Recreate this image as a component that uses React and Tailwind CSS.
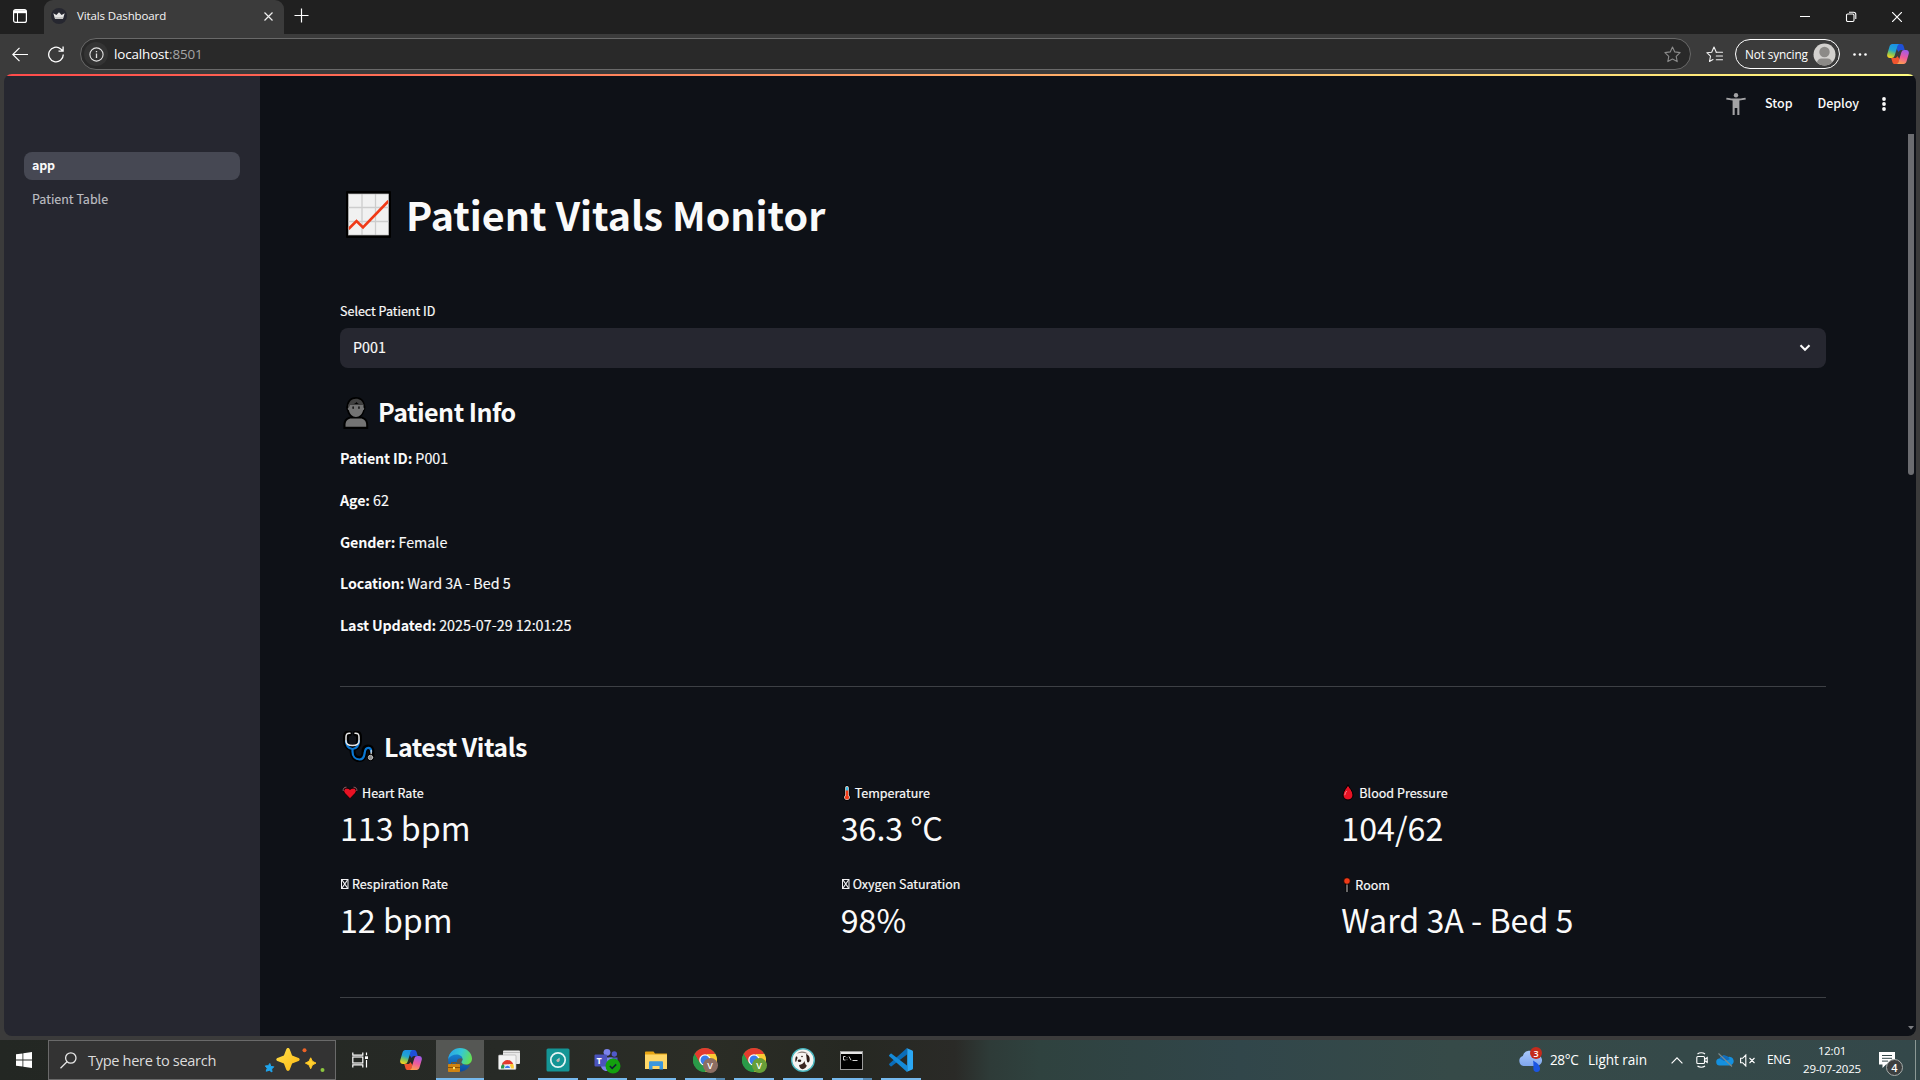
const SANS = "font-['Noto_Sans_CJK_SC',sans-serif]";
const UI = "font-['Open_Sans',sans-serif]";

/* ---------- Browser icons ---------- */

function CopilotIcon({ id }) {
  return (
    <svg width="22" height="20" viewBox="0 0 22 20" className="block shrink-0">
      <defs>
        <linearGradient id={`${id}a`} x1="0.6" y1="0" x2="0.3" y2="1">
          <stop offset="0" stopColor="#1a8fe8" />
          <stop offset="0.45" stopColor="#22a5d0" />
          <stop offset="0.7" stopColor="#7fc45a" />
          <stop offset="1" stopColor="#ffd21c" />
        </linearGradient>
        <linearGradient id={`${id}b`} x1="0.6" y1="0" x2="0.3" y2="1">
          <stop offset="0" stopColor="#a05be8" />
          <stop offset="0.5" stopColor="#ee5a9c" />
          <stop offset="1" stopColor="#ffa04c" />
        </linearGradient>
      </defs>
      <path d="M11 0h3.2c1.3 0 2 .8 2.400 2.100L17.800 6h-3.500c-1.400 0-2.200.8-2.600 2.100L9.500 5z" fill="#1f50d8" />
      <path d="M11 20H7.800c-1.300 0-2-.8-2.400-2.100L4.200 14h3.500c1.400 0 2.200-.8 2.600-2.100l2.200 3.100z" fill="#f0542e" />
      <path d="M5.300 0h7.200c-1.200.3-1.700 1.300-2.100 2.600L7.700 11.500C7.200 13.200 6.200 14 4.600 14H3C.6 14-.3 12.200.3 10L2.500 2.500C3 .9 3.900 0 5.300 0z" fill={`url(#${id}a)`} />
      <path d="M16.700 20H9.500c1.200-.3 1.700-1.300 2.100-2.600l2.700-8.900C14.800 6.800 15.800 6 17.400 6H19c2.400 0 3.300 1.800 2.700 4l-2.200 7.500c-.5 1.600-1.400 2.500-2.800 2.500z" fill={`url(#${id}b)`} />
    </svg>
  );
}

function TabActionsIcon() {
  return (
    <svg width="14" height="14" viewBox="0 0 14 14" className="block">
      <rect x="0.6" y="0.6" width="12.800" height="12.800" rx="2" fill="none" stroke="#fff" strokeWidth="1.200" />
      <path d="M1 1.200h12v3H1z" fill="#fff" />
      <path d="M4.500 4v9" stroke="#fff" />
    </svg>
  );
}

function CrownFavicon() {
  return (
    <svg width="16" height="16" viewBox="0 0 16 16" className="block">
      <circle cx="8" cy="8" r="8" fill="#262730" />
      <path d="M2.300 5.200 5.400 7 8 4.200 10.600 7l3.100-1.800-1.600 5.300c-.1.400-.4.500-.8.500H4.700c-.4 0-.7-.1-.8-.5z" fill="#e4e4e4" />
      <path d="M3.600 9.200h8.800l-.5 1.500H4.100z" fill="#b9b9b9" />
    </svg>
  );
}

function StarIcon({ color, list }) {
  return (
    <svg width="17" height="17" viewBox="0 0 17 17" className="block" fill="none" stroke={color} strokeWidth="1.100" strokeLinejoin="round" strokeLinecap="round">
      {list ? (
        <>
          <path d="M10.300 6.200 8 1 5.700 6.200.8 6.700l3.700 3.500-1 5.300L7 13.600" />
          <path d="M10.300 6.300h6.200M10.300 10h6.200M10.300 13.700h6.200" />
        </>
      ) : (
        <path d="m8.500 1 2.300 4.900 5.300.7-3.900 3.700 1 5.300-4.700-2.600-4.700 2.600 1-5.300L.9 6.600l5.300-.7z" />
      )}
    </svg>
  );
}

/* ---------- Emoji style icons ---------- */

function ChartEmoji() {
  return (
    <svg width="46" height="48" viewBox="0 0 46 48" className="block">
      <rect x="0" y="0" width="45" height="47" rx="1" fill="#000" />
      <rect x="2.500" y="3" width="40" height="41" fill="#f1f1f1" />
      <path d="M16 3v41M29.500 3v41M2.500 16.500h40M2.500 30.500h40" stroke="#cdcdcd" strokeWidth="1.300" />
      <path d="M2.500 38 10.500 30l6.500 6.500L42.500 10" fill="none" stroke="#f03a17" strokeWidth="2.600" />
      <rect x="2.500" y="3" width="40" height="41" fill="none" stroke="#bdbdbd" strokeWidth="0.700" />
    </svg>
  );
}

function PersonEmoji() {
  return (
    <svg width="26" height="32" viewBox="0 0 26 32" className="block">
      <path d="M13 0c5 0 8.500 3.400 9 8.500.7.600.7 3.800-.4 4.800-.7 3-1.800 5-3.800 6.300 4.700.5 7.400 4 7.400 8.400v4H.4v-4c0-4.400 2.700-7.900 7.400-8.400-2-1.300-3.100-3.300-3.800-6.300-1-1-1-4.200-.3-4.800C4.200 3.400 8 0 13 0z" fill="#000" />
      <path d="M5.500 7.500h15v3c1 0 1 2.600-.4 2.800C19.500 17 16.600 20 13 20s-6.500-3-7.100-6.700c-1.400-.2-1.400-2.800-.4-2.800z" fill="#737373" />
      <path d="M5.300 10.500C5.300 5 8.500 1.800 13 1.800c3.800 0 6.700 2.200 7.500 6C17 8 14.800 6.800 13.600 5 12.300 7 9 7.800 7 7.800c0 1.200-.5 2.200-1.700 2.700z" fill="#404040" />
      <rect x="9.300" y="9.200" width="1.700" height="2.800" rx="0.800" fill="#1b1b1b" />
      <rect x="15.100" y="9.200" width="1.700" height="2.800" rx="0.800" fill="#1b1b1b" />
      <path d="M2.500 29.800v-2c0-3.800 2.400-6.200 6-6.200h8.700c3.600 0 6 2.400 6 6.200v2z" fill="#737373" />
    </svg>
  );
}

function StethoscopeEmoji() {
  return (
    <svg width="32" height="32" viewBox="0 0 32 32" className="block" fill="none" strokeLinecap="round">
      <path d="M6 2.500C3.500 2.500 3 3.500 3 6v4c0 4 2.500 7 6.500 7S16 14 16 10V6c0-2.500-.5-3.500-3-3.500M9.500 17v3c0 5 3 8 7 8s5-4 5-7 1-4.500 3.500-4.500S28.500 18 28.500 21v4" stroke="#000" strokeWidth="6" />
      <path d="M3 10c0 4 2.500 8 6.500 8S16 14 16 10M9.500 18.500v2c0 5 3 8 7 8s4.800-3.500 5.200-6.500c.3-3 .8-5.200 3.500-5.200 2.500 0 3 2 3 4" stroke="#0a78d4" strokeWidth="2.200" />
      <path d="M7 2.200C4 2 3 3.200 3 6v4c0 3 3 4.500 6.500 4.500S16 13 16 10V6c0-2.800-1-4-4-3.800" stroke="#e6e6e6" strokeWidth="1.500" />
      <path d="M28.200 19.500v4" stroke="#d0d0d0" strokeWidth="1.300" />
      <circle cx="27.500" cy="26.500" r="3.400" fill="#000" />
      <circle cx="27.500" cy="26.500" r="2.200" fill="#8e8e8e" stroke="#bdbdbd" strokeWidth="1" />
    </svg>
  );
}

function HeartEmoji() {
  return (
    <svg width="16" height="14" viewBox="0 0 16 14" className="block">
      <path d="M8 12.700 2.500 7C1.200 5.200 1.800 2.900 3.700 2.300 5.300 1.900 6.900 2.400 8 3.600c1.100-1.200 2.700-1.700 4.300-1.300 1.900.6 2.500 2.900 1.200 4.700z" fill="#e81224" stroke="#000" strokeWidth="0.800" />
      <path d="M1.200 5C.9 2.500 2.200 1.100 4.500 1.200M14.800 5c.3-2.500-1-3.900-3.300-3.800" fill="none" stroke="#9a5f64" strokeWidth="0.900" />
    </svg>
  );
}

function ThermometerEmoji() {
  return (
    <svg width="8" height="16" viewBox="0 0 8 16" className="block">
      <path d="M4 .2c1.700 0 2.500 1 2.500 2.500v7c.8.7 1.200 1.500 1.200 2.500 0 2-1.600 3.500-3.700 3.500S.3 14.200.3 12.200c0-1 .4-1.800 1.200-2.500v-7C1.500 1.200 2.300.2 4 .2z" fill="#000" />
      <path d="M4 1c1.200 0 1.800.8 1.800 2v7.200c.7.500 1.100 1.200 1.100 2 0 1.500-1.300 2.700-2.900 2.700s-2.900-1.200-2.900-2.700c0-.8.400-1.500 1.100-2V3C2.200 1.800 2.800 1 4 1z" fill="#e8dcd8" />
      <path d="M3 3c0-.7.400-1.100 1-1.100s1 .4 1 1.100v3H3z" fill="#35c1f1" />
      <path d="M2.800 5.500h2.400v5.200c.6.300 1 .9 1 1.500a2.200 2.200 0 0 1-4.400 0c0-.6.400-1.200 1-1.500z" fill="#f03a17" />
    </svg>
  );
}

function DropEmoji() {
  return (
    <svg width="12" height="17" viewBox="0 0 12 17" className="block">
      <path d="M6 .8C7.200 4 11 6.800 11 11a5 5 0 0 1-10 0C1 6.800 4.800 4 6 .8z" fill="#e81224" stroke="#000" strokeWidth="1" />
      <path d="M2.800 10.800C3 9.300 3.600 8.300 4.500 7.300" fill="none" stroke="#f4838c" strokeWidth="1" strokeLinecap="round" />
    </svg>
  );
}

function PinEmoji() {
  return (
    <svg width="8" height="16" viewBox="0 0 8 16" className="block">
      <path d="M4 6v9" stroke="#000" strokeWidth="3" />
      <path d="M4 6v9" stroke="#8a8a8a" strokeWidth="1.500" />
      <circle cx="4" cy="4" r="3.300" fill="#f03a17" stroke="#000" strokeWidth="0.700" />
    </svg>
  );
}

function MissingGlyph() {
  return (
    <svg width="8" height="10" viewBox="0 0 8 10" className="block">
      <rect x="0.500" y="0.500" width="6.500" height="9" fill="none" stroke="#f0f0f2" strokeWidth="1" />
      <path d="m1 1 5.500 8M6.500 1 1 9" stroke="#f0f0f2" strokeWidth="1.200" />
    </svg>
  );
}

function PersonArmsIcon() {
  return (
    <svg width="20" height="23" viewBox="0 0 20 23" className="block" fill="#a3a3a5">
      <circle cx="10" cy="2.300" r="2.200" />
      <path d="M.5 4.700C3.500 5.200 7 5.600 10 5.600s6.500-.4 9.500-.9l.3 1.900c-2 .4-4.300.8-6.400 1V22h-2.100v-7H8.700v7H6.600V7.600c-2.100-.2-4.400-.6-6.400-1z" />
    </svg>
  );
}

/* ---------- Taskbar icons ---------- */

function SparklesArt() {
  return (
    <svg width="62" height="30" viewBox="0 0 62 30" className="block">
      <defs>
        <linearGradient id="sparkle" x1="0" y1="0" x2="1" y2="1">
          <stop offset="0" stopColor="#ffe04a" />
          <stop offset="1" stopColor="#fdb813" />
        </linearGradient>
      </defs>
      <path d="M24 3c1 0 1.500.6 1.900 1.700l2.200 5.800 5.800 2.200c2.400.8 2.400 2.800 0 3.600l-5.800 2.200-2.200 5.800c-.8 2.300-3 2.300-3.800 0l-2.200-5.800-5.800-2.200c-2.400-.8-2.400-2.800 0-3.600l5.800-2.200 2.200-5.800C22.500 3.600 23 3 24 3z" fill="url(#sparkle)" />
      <path d="m46.700 12.800 1.700 3.500 3.600 1.800-3.600 1.800-1.700 3.800-1.700-3.800-3.600-1.800 3.600-1.800z" fill="#ffd02e" stroke="#ffc423" strokeLinejoin="round" />
      <path d="m5.800 18.500 1 3 3 .3-2.200 2.200.4 3-2.600-1.700-3.200.9 1-3-1.900-2.300 3-.2z" fill="#1fa5ee" stroke="#1fa5ee" strokeLinejoin="round" />
      <circle cx="40.500" cy="5.300" r="2" fill="#ee6326" />
      <circle cx="58.500" cy="25" r="2" fill="#8cc63f" />
    </svg>
  );
}

function TaskViewIcon() {
  return (
    <svg width="17" height="16" viewBox="0 0 17 16" className="block" fill="none" stroke="#fff" strokeWidth="1.200">
      <path d="M.8.500v2.600h10V.500M.8 15.500v-2.600h10v2.600" />
      <rect x="0.800" y="5" width="10" height="6" />
      <path d="M14.500.500v2.800M14.500 8v7.500" />
      <path d="M13 4.300h3V7h-3z" fill="#fff" stroke="none" />
    </svg>
  );
}

function EdgeIcon() {
  return (
    <svg width="24" height="24" viewBox="0 0 24 24" className="block">
      <defs>
        <linearGradient id="edgeTop" x1="0" y1="0.300" x2="1" y2="0.600">
          <stop offset="0" stopColor="#2aa4e8" />
          <stop offset="0.500" stopColor="#35c8d4" />
          <stop offset="1" stopColor="#66e04e" />
        </linearGradient>
        <linearGradient id="edgeBase" x1="0" y1="0" x2="0" y2="1">
          <stop offset="0" stopColor="#1b8fdc" />
          <stop offset="1" stopColor="#0d4ba0" />
        </linearGradient>
      </defs>
      <path d="M.2 11C1 4.500 6 1 12 1c4 6 2 11 3 14 1 2.500 5 3 7 2-2 4-5.500 6.500-10 6.500C5 23.500-.5 18 .2 11z" fill="url(#edgeBase)" />
      <path d="M.2 11C1 4.500 6 0 12 0c6.800 0 12 5 12 10.500 0 4-3 6-6 6-3.200 0-4.700-1.200-4.700-2.200 0-.8 1.200-1.300 1.200-3.300C14.500 8 11.500 6.500 8.500 6.500 5 6.500 2 8 .2 11z" fill="url(#edgeTop)" />
      <path d="M9 12.500c1-2.500 4.500-3 5.500-1.500 0 2-1.200 2.500-1.200 3.300 0 .8.700 1.500 1.700 1.800l-1 1.500H8.500z" fill="#555754" />
      <rect x="0" y="16" width="12" height="8" rx="0.800" fill="#d08412" />
      <path d="M0 19.500h12" stroke="#8f5200" />
      <path d="M3.500 16v-1.200h5V16" fill="none" stroke="#8f5200" />
      <rect x="5" y="19" width="2" height="2.200" fill="#ffdf61" />
    </svg>
  );
}

function ChromeDisc() {
  return (
    <svg width={24} height={24} viewBox="0 0 24 24">
      <circle cx="12" cy="12" r="12" fill="#2a9a48" />
      <path d="M12 12 1.600 6A12 12 0 0 1 22.400 6z" fill="#e33b2e" />
      <path d="M12 6h10.400A12 12 0 0 1 12 24l5.200-9z" fill="#fcc934" />
      <path d="m1.600 6 5.200 9L12 12l2-6H12z" fill="#e33b2e" />
      <path d="M1.600 6 6.800 15 12 18l5.200-3L12 24A12 12 0 0 1 1.600 6z" fill="#2a9a48" />
      <circle cx="12" cy="12" r="5.800" fill="#fff" />
      <circle cx="12" cy="12" r="4.500" fill="#3a7cec" />
    </svg>
  );
}

function ChromeIcon({ badge }) {
  return (
    <div className="relative h-6 w-6">
      <svg width="24" height="24" className="block">
        <ChromeDisc />
      </svg>
      <span className={`${UI} ${badge} absolute top-[10px] left-[10px] flex h-[15px] w-[15px] items-center justify-center rounded-full text-[9px] leading-none font-semibold text-white`}>V</span>
    </div>
  );
}

function ChromeWindowsIcon() {
  return (
    <svg width="22" height="20" viewBox="0 0 22 20" className="block">
      <rect x="5" y="0.500" width="17" height="13.500" rx="1" fill="#e9e9e9" />
      <path d="M5 2.500h17" stroke="#bcbcbc" />
      <rect x="0.500" y="5" width="17.500" height="14.500" rx="1" fill="#f4f4f4" stroke="#a9a9a9" strokeWidth="0.600" />
      <path d="M3 18.500a6.500 6.500 0 0 1 2-5.200l3 5.200z" fill="#2a9a48" />
      <path d="M3.800 14.500C5 11.500 7 10 9.500 10s4.700 1.500 5.700 4z" fill="#e33b2e" />
      <path d="M15.200 14c.6 1.300.8 3 .6 4.500H11l1.500-4.500z" fill="#fcc934" />
      <path d="M6.300 18.500a3.200 3.200 0 0 1 6.400 0z" fill="#3a7cec" stroke="#fff" strokeWidth="0.800" />
    </svg>
  );
}

function ClockAppIcon() {
  return (
    <svg width="24" height="24" viewBox="0 0 24 24" className="block">
      <rect x="0.500" y="0.500" width="23" height="23" rx="1.500" fill="#149595" />
      <circle cx="12" cy="12" r="7.200" fill="none" stroke="#e6f5f5" strokeWidth="1.700" />
      <path d="m10.500 12.500 3-3v3z" fill="#d8e4e4" />
      <circle cx="12" cy="12.500" r="1.500" fill="#c9b1ae" />
    </svg>
  );
}

function TeamsIcon() {
  return (
    <div className="relative h-6 w-[26px]">
      <svg width="26" height="24" viewBox="0 0 26 24" className="block">
        <circle cx="20.300" cy="6" r="2.700" fill="#5059c9" />
        <circle cx="13" cy="4.300" r="3.400" fill="#7b83eb" />
        <path d="M15 9.500h8.500V16c0 3-2 5-4.500 5z" fill="#5059c9" />
        <path d="M7 9.500h11.500V17a6 6 0 0 1-6 6c-3.300 0-5.500-2.500-5.500-6z" fill="#7b83eb" />
        <rect x="0.500" y="6.500" width="12.500" height="12" rx="1" fill="#4b53bc" />
      </svg>
      <span className={`${UI} absolute top-[7px] left-[3px] text-[9px] leading-[11px] font-bold text-white`}>T</span>
      <svg width="16" height="16" viewBox="0 0 16 16" className="absolute top-[10px] left-[11px]">
        <circle cx="8" cy="8" r="7.500" fill="#13a10e" />
        <path d="m4.800 8 2.400 2.400 4-4" fill="none" stroke="#123" strokeWidth="1.500" />
      </svg>
    </div>
  );
}

function FolderIcon() {
  return (
    <svg width="22" height="19" viewBox="0 0 22 19" className="block">
      <path d="M0 1.500C0 .7.500.500 1 .500h7.500l1.500 2h12V17H0z" fill="#e8a512" />
      <path d="M0 3.500h22V18H0z" fill="#ffd767" />
      <path d="M4 18.500V11.500c0-.8.400-1.200 1.200-1.200h11.600c.8 0 1.200.4 1.200 1.200v7h-3.500V15h-7v3.500z" fill="#3a96dd" />
    </svg>
  );
}

function DogIcon() {
  return (
    <svg width="24" height="24" viewBox="0 0 24 24" className="block">
      <circle cx="12" cy="12" r="11.300" fill="#f6f4f2" stroke="#49b6bf" strokeWidth="1.400" />
      <path d="M6 5.500c4-3 9-2.200 11 .5l-2.500-.8C12 4.300 9 4.500 6 5.500z" fill="#8b7d78" />
      <path d="M15 6c2.500.5 4 3 3.700 6-.2 2-1.500 3-2.500 2-.7-2-.5-5-1.200-8z" fill="#2c1a16" />
      <path d="M5 8.500c1-.3 1.500.3 1.500 1.500L5 14c-1 0-1-3.500 0-5.500z" fill="#2c1a16" />
      <ellipse cx="8.500" cy="12.800" rx="1.800" ry="1.200" fill="#2c1a16" />
      <circle cx="11" cy="8.500" r="0.800" fill="#2c1a16" />
      <path d="M13.500 13c-.8 2.500-2.800 3.500-5.500 4 .5 2.500 1.500 3.800 3.500 4.300 2-.3 4-2 4.300-3.800-1.500-1-1.800-2.500-2.300-4.500z" fill="#3a2621" />
    </svg>
  );
}

function TerminalIcon() {
  return (
    <svg width="23" height="19" viewBox="0 0 23 19" className="block">
      <rect x="0.500" y="0.500" width="22" height="18" fill="#000" stroke="#9b9b9b" />
      <rect x="1" y="1" width="21" height="2" fill="#e6e6e6" />
      <path d="M3.500 5.500v3.500M3.500 5.500h2M3.500 9h2M7 6.500v.6M7 8.500v.6M9 5.500l2 3.700M12.500 9.500h5" stroke="#d6d6d6" fill="none" />
    </svg>
  );
}

function VsCodeIcon() {
  return (
    <svg width="24" height="24" viewBox="0 0 24 24" className="block">
      <path d="M18 0v6.600L2.600 18.200c-.4.300-.7.300-1 0L.300 17c-.4-.4-.4-.9 0-1.300z" fill="#0a6cb8" />
      <path d="M18 24v-6.600L2.600 5.800c-.4-.3-.7-.3-1 0L.300 7c-.4.400-.4.900 0 1.300z" fill="#148ad8" />
      <path d="m17.500 0 5.800 2.600c.5.200.7.600.7 1.100v16.600c0 .5-.2.900-.7 1.100L17.500 24c.5-.3.700-.7.700-1.300V1.300c0-.6-.2-1-.7-1.300z" fill="#2ba7f4" />
    </svg>
  );
}

function WeatherIcon() {
  return (
    <div className="relative h-6 w-6">
      <svg width="24" height="24" viewBox="0 0 24 24" className="block">
        <defs>
          <linearGradient id="cloud" x1="0" y1="0" x2="0" y2="1">
            <stop offset="0" stopColor="#a9c8fa" />
            <stop offset="1" stopColor="#7fa6ee" />
          </linearGradient>
        </defs>
        <path d="M5.500 18A5.200 5.200 0 0 1 4.800 8 6.800 6.800 0 0 1 17.500 6.500 5.500 5.500 0 0 1 19 18z" fill="url(#cloud)" />
        <path d="M15 12.500c3 1.500 7 4.500 7 8a3.300 3.300 0 0 1-6.600.3c-.2-2.500.4-5-.4-8.300z" fill="#1b55e2" />
      </svg>
      <span className={`${UI} absolute top-[-1px] left-3 flex h-3 w-3 items-center justify-center rounded-full bg-[#c42b1c] text-[9px] leading-none font-semibold text-white`}>3</span>
    </div>
  );
}

/* ---------- Layout pieces ---------- */

function TitleBar() {
  return (
    <div className="flex h-[34px] bg-[#202020]">
      <div className="flex w-11 items-center pb-[2px] pl-[13px]">
        <TabActionsIcon />
      </div>
      <div className="flex h-[34px] w-60 items-center rounded-t-[9px] bg-[#3b3b3b] pb-[2px] pl-[7px]">
        <CrownFavicon />
        <span className={`${UI} ml-[10px] w-[187px] text-[11.5px] leading-4 tracking-[-0.12px] text-[#f5f5f5]`}>Vitals Dashboard</span>
        <svg width="9" height="9" viewBox="0 0 9 9" className="mt-px block">
          <path d="m.5.500 8 8M8.500.500l-8 8" stroke="#eee" strokeWidth="1.200" />
        </svg>
      </div>
      <div className="flex items-center pb-[3px] pl-[10px]">
        <svg width="15" height="15" viewBox="0 0 15 15" className="block">
          <path d="M7.500.500v14M.500 7.500h14" stroke="#fff" strokeWidth="1.200" />
        </svg>
      </div>
      <div className="ml-auto flex items-center gap-9 pr-[18px]">
        <svg width="10" height="10" viewBox="0 0 10 10" className="block">
          <path d="M0 4.500h10" stroke="#fff" />
        </svg>
        <svg width="10" height="10" viewBox="0 0 10 10" className="block overflow-visible" fill="none" stroke="#fff" strokeWidth="1.100">
          <rect x="0.500" y="2" width="7.500" height="7.500" rx="1.200" />
          <path d="M3 .2h4.500c1.400 0 2.300.9 2.300 2.300v4.500" />
        </svg>
        <svg width="10" height="10" viewBox="0 0 10 10" className="block">
          <path d="m0 0 10 10M10 0 0 10" stroke="#fff" strokeWidth="1.200" />
        </svg>
      </div>
    </div>
  );
}

function Toolbar() {
  return (
    <div className="flex h-10 items-center bg-[#3b3b3b] pl-3">
      <svg width="16" height="15" viewBox="0 0 16 15" className="block" fill="none" stroke="#fff" strokeWidth="1.200">
        <path d="M16 7.500H1M7.500.800.800 7.500l6.700 6.700" />
      </svg>
      <svg width="17" height="17" viewBox="0 0 17 17" className="ml-5 block" fill="none" stroke="#fff" strokeWidth="1.300">
        <path d="M15.300 8.500a7.300 7.300 0 1 1-2.600-5.600l2.300 2M15.100.500v4.600H10.500" />
      </svg>
      <div className="ml-[15px] flex h-8 w-[1611px] items-center rounded-full border border-[#696969] bg-[#292929] pr-[9px] pl-[3px]">
        <div className="flex h-6 w-6 items-center justify-center rounded-full bg-[#343434]">
          <svg width="15" height="15" viewBox="0 0 15 15" className="block">
            <circle cx="7.500" cy="7.500" r="6.600" fill="none" stroke="#e2e2e2" strokeWidth="1.100" />
            <path d="M7.500 6.500V11M7.500 4v1.300" stroke="#e2e2e2" strokeWidth="1.300" />
          </svg>
        </div>
        <span className={`${UI} ml-[6px] text-[13.4px] leading-5 tracking-[-0.12px] text-white`}>
          localhost<span className="text-[#a5a5a5]">:8501</span>
        </span>
        <div className="ml-auto">
          <StarIcon color="#8b8b8b" />
        </div>
      </div>
      <div className="ml-[15px]">
        <StarIcon color="#f2f2f2" list />
      </div>
      <div className="ml-[12px] flex h-[30px] w-[105px] items-center rounded-full border border-white pl-[9px]">
        <span className={`${UI} w-[68px] text-[11.8px] leading-4 tracking-[-0.14px] text-white`}>Not syncing</span>
        <svg width="23" height="23" viewBox="0 0 23 23" className="block">
          <defs>
            <clipPath id="avatar">
              <circle cx="11.500" cy="11.500" r="11" />
            </clipPath>
          </defs>
          <g clipPath="url(#avatar)">
            <rect width="23" height="23" fill="#d3d1ce" />
            <circle cx="11.500" cy="9" r="5.200" fill="#8c8a87" />
            <path d="M4 23v-3c0-2.800 2-4.500 4.500-4.500h6c2.500 0 4.500 1.700 4.500 4.500v3z" fill="#8c8a87" />
          </g>
        </svg>
      </div>
      <svg width="14" height="3" viewBox="0 0 14 3" className="ml-[13px] block" fill="#fff">
        <circle cx="1.500" cy="1.500" r="1.300" />
        <circle cx="7" cy="1.500" r="1.300" />
        <circle cx="12.500" cy="1.500" r="1.300" />
      </svg>
      <div className="ml-5">
        <CopilotIcon id="cp1" />
      </div>
    </div>
  );
}

function Sidebar() {
  return (
    <aside className={`${SANS} w-64 shrink-0 bg-[#262730] px-5 pt-[76px]`}>
      <div className="flex h-7 items-center rounded-lg bg-[#464853] px-2 pb-[2px] text-[12.5px] leading-5 font-bold tracking-[-0.2px] text-[#fafafa]">app</div>
      <div className="mt-[5px] flex h-7 items-center px-2 pb-px text-[12.5px] leading-5 text-[#bcbdc1] [-webkit-text-stroke:0.15px]">Patient Table</div>
    </aside>
  );
}

function AppHeader() {
  return (
    <header className="flex h-[56px] items-center pr-[22px]">
      <div className="ml-auto">
        <PersonArmsIcon />
      </div>
      <span className="mb-[2px] ml-[19px] text-[12.5px] leading-5 font-medium tracking-[-0.05px]">Stop</span>
      <span className="mb-[2px] ml-[25px] text-[12.5px] leading-5 font-medium tracking-[-0.05px]">Deploy</span>
      <svg width="4" height="14" viewBox="0 0 4 14" className="ml-[23px] block" fill="#fafafa">
        <circle cx="2" cy="2" r="1.900" />
        <circle cx="2" cy="7" r="1.900" />
        <circle cx="2" cy="12" r="1.900" />
      </svg>
    </header>
  );
}

const INFO = [
  ["Patient ID:", "P001"],
  ["Age:", "62"],
  ["Gender:", "Female"],
  ["Location:", "Ward 3A - Bed 5"],
  ["Last Updated:", "2025-07-29 12:01:25"],
];

const VITALS = [
  [
    { icon: <HeartEmoji />, pad: "pl-[2px] gap-[4px]", label: "Heart Rate", value: "113 bpm" },
    { icon: <ThermometerEmoji />, pad: "pl-[2px] gap-[4px]", label: "Temperature", value: "36.3 °C" },
    { icon: <DropEmoji />, pad: "pl-[1px] gap-[5px]", label: "Blood Pressure", value: "104/62" },
  ],
  [
    { icon: <MissingGlyph />, pad: "pl-[1px] gap-[3px]", label: "Respiration Rate", value: "12 bpm" },
    { icon: <MissingGlyph />, pad: "pl-[1px] gap-[3px]", label: "Oxygen Saturation", value: "98%" },
    { icon: <PinEmoji />, pad: "pl-[2px] gap-[4px] pt-[2px]", label: "Room", value: "Ward 3A - Bed 5" },
  ],
];

function Metric({ item, valueGap }) {
  return (
    <div>
      <div className={`flex h-[21px] items-center ${item.pad}`}>
        <span className="shrink-0">{item.icon}</span>
        <span className="text-[12.5px] leading-5 tracking-[0.03px] [-webkit-text-stroke:0.2px]">{item.label}</span>
      </div>
      <div className={`${valueGap} h-[42px] text-[32.2px] leading-[42px]`}>{item.value}</div>
    </div>
  );
}

function Main() {
  return (
    <main className={`${SANS} flex min-w-0 flex-1 bg-[#0e1117] text-[#fafafa]`}>
      <div className="flex min-w-0 flex-1 flex-col">
        <AppHeader />
        <div className="pr-[82px] pl-20">
          <div className="mt-[52px] flex h-[60px] items-center">
            <span className="mt-[2px] ml-[6px]">
              <ChartEmoji />
            </span>
            <h1 className="ml-[14px] text-[39.4px] leading-[60px] font-bold tracking-[0.03px] whitespace-nowrap">Patient Vitals Monitor</h1>
          </div>
          <div className="mt-14 h-[21px] text-[12.5px] leading-[21px] [-webkit-text-stroke:0.2px]">Select Patient ID</div>
          <div className="mt-[7px] flex h-10 items-center rounded-lg bg-[#262730] pr-[15px] pb-[2px] pl-[13px]">
            <span className="text-[14.3px] leading-6 [-webkit-text-stroke:0.15px]">P001</span>
            <svg width="12" height="8" viewBox="0 0 12 8" className="mt-[2px] ml-auto block">
              <path d="m1.500 1.300 4.500 4.500 4.500-4.500" fill="none" stroke="#fafafa" strokeWidth="2.100" />
            </svg>
          </div>
          <div className="mt-[26px] flex h-[35px] items-center">
            <span className="mt-[2px] ml-[3px]">
              <PersonEmoji />
            </span>
            <h2 className="ml-[9px] text-[25px] leading-[35px] font-bold tracking-[-0.5px]">Patient Info</h2>
          </div>
          <div className="mt-4 flex h-[193px] flex-col justify-between text-[14.3px] leading-[26px] [-webkit-text-stroke:0.15px]">
            {INFO.map(([k, v]) => (
              <p key={k}>
                <strong className="font-bold tracking-[-0.15px] [-webkit-text-stroke:0px]">{k}</strong> {v}
              </p>
            ))}
          </div>
          <div className="mt-12 h-px bg-[#3d4045]" />
          <div className="mt-[42px] flex h-[34px] items-center">
            <span className="mt-[2px] ml-[3px]">
              <StethoscopeEmoji />
            </span>
            <h2 className="ml-[9px] text-[25px] leading-[34px] font-bold tracking-[-0.5px]">Latest Vitals</h2>
          </div>
          <div className="mt-[19px] grid grid-cols-3 gap-x-4">
            {VITALS[0].map((m) => (
              <Metric key={m.label} item={m} valueGap="mt-[3px]" />
            ))}
          </div>
          <div className="mt-[25px] grid grid-cols-3 gap-x-4">
            {VITALS[1].map((m) => (
              <Metric key={m.label} item={m} valueGap="mt-1" />
            ))}
          </div>
          <div className="mt-[57px] h-px bg-[#3d4045]" />
        </div>
      </div>
      <div className="flex w-2 flex-col justify-between pt-[58px] pb-[6px]">
        <div className="h-[341px] w-[6px] rounded-b-[3px] bg-[#6b6c70]" />
        <svg width="6" height="4" viewBox="0 0 6 4" className="block">
          <path d="M0 0h6L3 3.500z" fill="#7b7c80" />
        </svg>
      </div>
    </main>
  );
}

const APPS = [
  { id: "windows", icon: <ChromeWindowsIcon /> },
  { id: "clock", icon: <ClockAppIcon />, open: 1 },
  { id: "teams", icon: <TeamsIcon />, open: 1 },
  { id: "files", icon: <FolderIcon />, open: 1 },
  { id: "chrome1", icon: <ChromeIcon badge="bg-[#8d6e63]" />, open: 2 },
  { id: "chrome2", icon: <ChromeIcon badge="bg-[#689f38]" />, open: 1 },
  { id: "dog", icon: <DogIcon />, open: 1 },
  { id: "terminal", icon: <TerminalIcon />, open: 2 },
  { id: "code", icon: <VsCodeIcon />, open: 1 },
];

function Taskbar() {
  return (
    <footer className={`${UI} flex h-10 bg-[linear-gradient(90deg,#232723_0px,#272a26_500px,#2b2d26_700px,#262822_850px,#2a2a27_955px,#2e3b38_990px,#2f423f_1040px,#31464a_1240px,#364a48_1450px,#34484a_1920px)] text-white`}>
      <div className="flex w-12 items-center justify-center">
        <svg width="16" height="16" viewBox="0 0 16 16" className="block" fill="#fff">
          <path d="M0 2.300 6.500 1.400v6.200H0zM7.300 1.300 16 0v7.600H7.300zM0 8.400h6.500v6.200L0 13.700zM7.300 8.400H16V16l-8.700-1.300z" />
        </svg>
      </div>
      <div className="flex w-72 items-center border border-[#6a6a6a] bg-[#333333] pr-[9px] pl-[11px]">
        <svg width="17" height="17" viewBox="0 0 17 17" className="block" fill="none" stroke="#e8e8e8" strokeWidth="1.300">
          <circle cx="10.800" cy="6" r="5.200" />
          <path d="M7 9.800.500 16.300" />
        </svg>
        <span className="ml-[11px] text-[14.6px] leading-5 tracking-[-0.33px] text-[#dcdcdc]">Type here to search</span>
        <span className="ml-auto">
          <SparklesArt />
        </span>
      </div>
      <div className="flex w-12 items-center justify-center">
        <TaskViewIcon />
      </div>
      <div className="flex w-[52px] items-center justify-center pl-[2px]">
        <CopilotIcon id="cp2" />
      </div>
      <div className="flex w-12 flex-col items-center border-b-2 border-[#76b9ed] bg-[#555754] pt-2">
        <EdgeIcon />
      </div>
      {APPS.map((a) => (
        <div key={a.id} className="flex w-[49px] flex-col items-center">
          <div className="flex h-[38px] items-center pt-[2px]">{a.icon}</div>
          <div className="flex h-[2px] w-10">
            {a.open ? <div className="flex-1 bg-[#76b9ed]" /> : null}
            {a.open === 2 ? <div className="w-[9px] bg-[#5286ae]" /> : null}
          </div>
        </div>
      ))}
      <div className="ml-auto flex items-center">
        <WeatherIcon />
        <span className="ml-2 w-[38px] text-[13.6px] leading-5 tracking-[-0.4px]">28°C</span>
        <span className="w-[83px] text-[13.6px] leading-5 tracking-[-0.05px]">Light rain</span>
        <svg width="12" height="7" viewBox="0 0 12 7" className="block">
          <path d="m.6 6.300 5.400-5.400 5.400 5.400" fill="none" stroke="#fff" strokeWidth="1.200" />
        </svg>
        <svg width="12" height="16" viewBox="0 0 12 16" className="ml-[13px] block" fill="none" stroke="#fff" strokeWidth="1.100">
          <rect x="0.800" y="4.500" width="7.700" height="7" rx="1" />
          <path d="m8.500 7.500 2.700-2v5l-2.700-2M1.500 2C3.500.3 7 .3 9 2M1.500 14c2 1.700 5.500 1.700 7.500 0" />
        </svg>
        <svg width="18" height="14" viewBox="0 0 18 14" className="ml-[8px] block">
          <path d="M4 12.500a3.500 3.500 0 0 1-.5-7A5.200 5.200 0 0 1 12 4a4.300 4.300 0 0 1 2.500 8.500z" fill="#1490df" />
          <path d="M3.500 5.500A5.200 5.200 0 0 1 12 4c1 .6 1.500 1.500 1.500 2.500L8 8z" fill="#0f6cbd" />
          <path d="m2.500.500 13.500 13" stroke="#7c8a8c" strokeWidth="1.100" />
        </svg>
        <svg width="15" height="13" viewBox="0 0 15 13" className="ml-[6px] block" fill="none" stroke="#fff" strokeWidth="1.100">
          <path d="M.6 4.300h2L5.800 1v11L2.600 8.700h-2zM9.500 4l5 5M14.500 4l-5 5" />
        </svg>
        <span className="ml-[12px] w-[35px] text-[12px] leading-5 tracking-[-0.4px]">ENG</span>
        <div className="w-[60px] text-center text-[11.5px] leading-[18px] tracking-[-0.22px]">
          <div>12:01</div>
          <div>29-07-2025</div>
        </div>
        <div className="relative ml-[17px] h-4 w-4">
          <svg width="16" height="16" viewBox="0 0 16 16" className="block">
            <path d="M0 0h16v12.500H7L3.500 16v-3.500H0z" fill="#fff" />
            <path d="M3 3.500h10M3 6.300h10M3 9.100h6" stroke="#34484a" />
          </svg>
          <span className="absolute top-[7px] left-[7px] flex h-[17px] w-[17px] items-center justify-center rounded-full border border-[#a7adab] bg-[#3c3f3f] text-[11px] leading-none font-semibold">4</span>
        </div>
        <div className="ml-5 h-10 w-px bg-[#8b9895]" />
        <div className="w-1" />
      </div>
    </footer>
  );
}

export default function App() {
  return (
    <div className="flex h-[1080px] w-[1920px] flex-col overflow-hidden bg-[#3b3b3b]">
      <TitleBar />
      <Toolbar />
      <div className="mx-1 flex h-[962px] flex-col overflow-hidden rounded-lg">
        <div className="h-[2px] shrink-0 bg-[linear-gradient(90deg,#ff4b4b,#fffd80)]" />
        <div className="flex min-h-0 flex-1">
          <Sidebar />
          <Main />
        </div>
      </div>
      <div className="h-1 shrink-0 bg-[#3b3b3b]" />
      <Taskbar />
    </div>
  );
}
